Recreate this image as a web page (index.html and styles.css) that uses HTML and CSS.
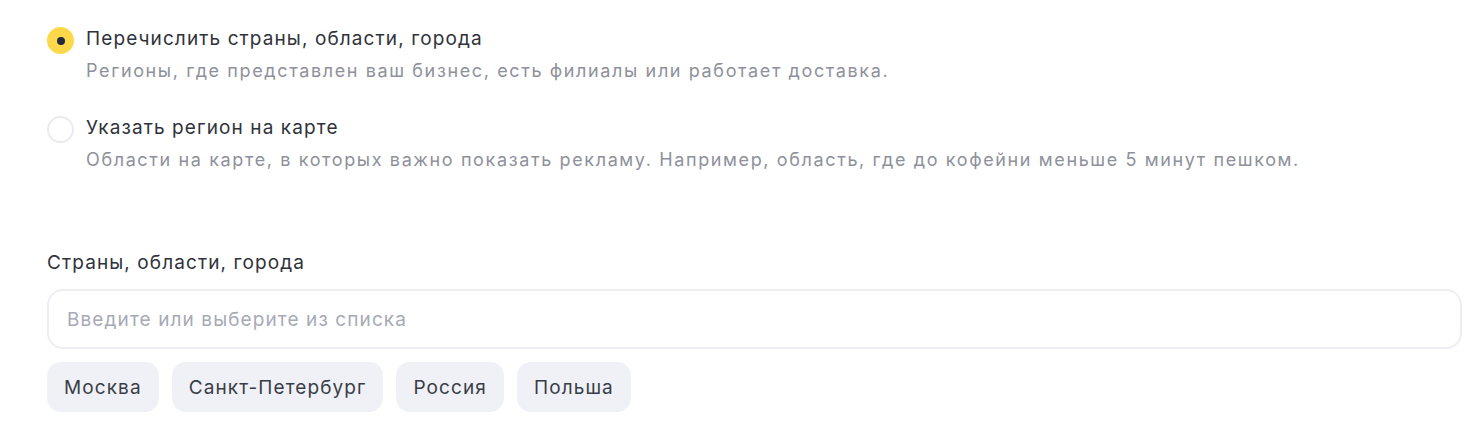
FILE: index.html
```html
<!DOCTYPE html>
<html lang="ru">
<head>
<meta charset="utf-8">
<link rel="stylesheet" href="styles.css">
</head>
<body>
<div class="page">
  <div class="options">
    <div class="option">
      <span class="radio radio-checked"><span class="dot"></span></span>
      <div class="option-text">
        <div class="option-title">Перечислить страны, области, города</div>
        <div class="option-desc">Регионы, где представлен ваш бизнес, есть филиалы или работает доставка.</div>
      </div>
    </div>
    <div class="option">
      <span class="radio"></span>
      <div class="option-text">
        <div class="option-title">Указать регион на карте</div>
        <div class="option-desc">Области на карте, в которых важно показать рекламу. Например, область, где до кофейни меньше 5 минут пешком.</div>
      </div>
    </div>
  </div>
  <div class="field">
    <div class="field-label">Страны, области, города</div>
    <div class="input"><span class="placeholder">Введите или выберите из списка</span></div>
    <div class="chips">
      <span class="chip">Москва</span>
      <span class="chip">Санкт-Петербург</span>
      <span class="chip">Россия</span>
      <span class="chip">Польша</span>
    </div>
  </div>
</div>
</body>
</html>
```
FILE: styles.css
```css
html, body {
  margin: 0;
  padding: 0;
  background: #ffffff;
}
body {
  font-family: Inter, "Noto Sans", sans-serif;
  color: #2f323a;
}
.page {
  padding: 26px 4px 0 47px;
}
.options {
  display: flex;
  flex-direction: column;
  gap: 31px;
}
.option {
  display: flex;
  gap: 12px;
  align-items: flex-start;
}
.radio {
  flex: none;
  width: 27px;
  height: 27px;
  box-sizing: border-box;
  border-radius: 50%;
  border: 2px solid #eaebf0;
  display: flex;
  align-items: center;
  justify-content: center;
  margin-top: 1px;
}
.radio-checked {
  background: #fcd84a;
  border-color: #fcd84a;
}
.dot {
  width: 8px;
  height: 8px;
  border-radius: 50%;
  background: #242a3b;
}
.option-title {
  font-size: 19px;
  letter-spacing: 1.1px;
  line-height: 26px;
  color: #2f323a;
}
.option-desc {
  margin-top: 6px;
  font-size: 18px;
  letter-spacing: 1.62px;
  line-height: 26px;
  color: #8e919b;
}
.field {
  margin-top: 77px;
}
.field-label {
  font-size: 19px;
  letter-spacing: 1.1px;
  line-height: 26px;
  color: #2f323a;
}
.input {
  margin-top: 13px;
  height: 60px;
  box-sizing: border-box;
  border: 2px solid #eceef3;
  border-radius: 16px;
  display: flex;
  align-items: center;
  padding: 0 18px;
}
.placeholder {
  font-size: 19px;
  letter-spacing: 1.1px;
  color: #a6aab5;
}
.chips {
  display: flex;
  gap: 13px;
  margin-top: 13px;
}
.chip {
  height: 50px;
  display: flex;
  align-items: center;
  padding: 0 17px;
  border-radius: 14px;
  background: #eff1f7;
  font-size: 19px;
  letter-spacing: 1.1px;
  color: #3a3d46;
}
```
